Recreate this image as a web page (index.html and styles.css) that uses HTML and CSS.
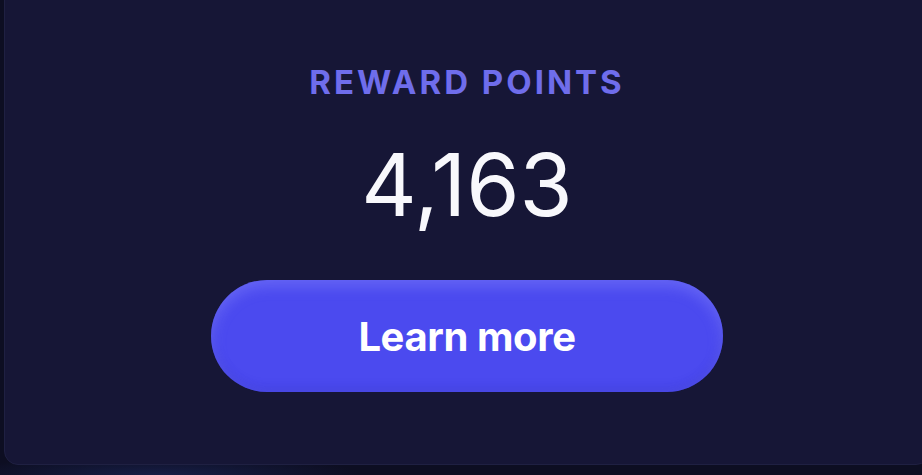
FILE: index.html
```html
<!DOCTYPE html>
<html lang="en">
<head>
<meta charset="utf-8">
<title>Reward points</title>
<link rel="stylesheet" href="styles.css">
</head>
<body>
<div class="stage">
  <section class="card">
    <h2 class="label">REWARD POINTS</h2>
    <div class="points">4,163</div>
    <button class="cta" type="button">Learn more</button>
  </section>
</div>
</body>
</html>
```
FILE: styles.css
```css
html, body {
  margin: 0;
  padding: 0;
  background: #0d0e22;
  width: 922px;
  height: 475px;
  overflow: hidden;
}
.stage {
  padding: 0 0 10px 4px;
  height: 475px;
  box-sizing: border-box;
  display: flex;
  flex-direction: column;
  justify-content: flex-end;
  background: radial-gradient(ellipse 200px 20px at 160px 475px, rgba(40,60,140,0.35), transparent 100%), #0d0e22;
}
.card {
  flex-shrink: 0;
  width: 926px;
  height: 485px;
  box-sizing: border-box;
  background: #161636;
  border: 1px solid #1f2042;
  border-radius: 14px;
  display: flex;
  flex-direction: column;
  align-items: center;
  padding-top: 81px;
  font-family: Inter, "Noto Sans", sans-serif;
}
.label {
  margin: 0;
  font-size: 33px;
  font-weight: 700;
  letter-spacing: 3px;
  color: #6f6deb;
  line-height: 40px;
}
.points {
  margin-top: 38px;
  font-size: 86px;
  font-weight: 400;
  color: #f8f8fc;
  line-height: 90px;
  letter-spacing: 0;
}
.cta {
  margin-top: 50px;
  width: 512px;
  height: 112px;
  border: none;
  border-radius: 56px;
  background: #4b4aef;
  box-shadow: inset 0 6px 14px rgba(140,140,255,0.45), inset 0 -4px 10px rgba(40,40,180,0.25);
  color: #ffffff;
  font-family: Inter, "Noto Sans", sans-serif;
  font-size: 40px;
  font-weight: 700;
  letter-spacing: -0.4px;
  cursor: pointer;
}
```
